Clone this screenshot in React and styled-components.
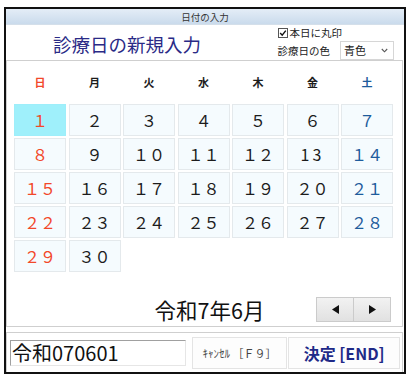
import React from "react";
import styled, { createGlobalStyle } from "styled-components";

const GlobalStyle = createGlobalStyle`
  html, body {
    margin: 0;
    padding: 0;
    background: #ffffff;
    font-family: "Noto Sans CJK JP", "Noto Sans", sans-serif;
  }
`;

const Page = styled.div`
  padding: 7px 0 0 4px;
`;

const Window = styled.div`
  width: 402px;
  box-sizing: border-box;
  border: 2px solid #111;
  background: #fff;
  display: flex;
  flex-direction: column;
`;

const TitleBar = styled.div`
  height: 16px;
  background: linear-gradient(#e4edf7, #cadbec);
  display: flex;
  align-items: center;
  justify-content: center;
  font-size: 9.5px;
  color: #333;
  border-bottom: 1px solid #d4dfea;
  box-sizing: border-box;
`;

const Header = styled.div`
  height: 35px;
  display: grid;
  grid-template-columns: 1fr auto;
  align-items: center;
  padding: 0 10px 0 47px;
`;

const Heading = styled.div`
  font-size: 18.5px;
  color: #2a2a86;
  padding-top: 3px;
`;

const Controls = styled.div`
  display: flex;
  flex-direction: column;
  gap: 1px;
  font-size: 10.5px;
  color: #222;
`;

const ControlRow = styled.div`
  display: flex;
  align-items: center;
  gap: ${(p) => p.gap || 2}px;
  height: ${(p) => p.h || 14}px;
`;

const SelectBox = styled.div`
  width: 54px;
  height: 19px;
  box-sizing: border-box;
  border: 1px solid #d6d6d6;
  display: flex;
  align-items: center;
  justify-content: space-between;
  padding: 0 5px 0 3px;
  font-size: 11px;
  background: #fff;
`;

const Panel = styled.div`
  border: 1px solid #cfcfcf;
  margin-right: 1px;
  box-sizing: border-box;
  padding: 11px 0 7px 7px;
`;

const Cols = styled.div`
  display: grid;
  grid-template-columns: repeat(7, 52px);
  column-gap: 2.5px;
  row-gap: 2px;
`;

const WeekRow = styled(Cols)`
  height: 20px;
  margin-bottom: 12px;
`;

const WeekDay = styled.div`
  display: flex;
  align-items: center;
  justify-content: center;
  font-size: 11px;
  font-weight: 700;
  color: ${(p) => p.color};
`;

const DayGrid = styled(Cols)`
  grid-auto-rows: 32px;
`;

const DayCell = styled.div`
  box-sizing: border-box;
  border: 1px solid ${(p) => (p.active ? "#9eeefa" : "#e4e9ec")};
  background: ${(p) => (p.active ? "#9ff0fb" : "#f5fbfe")};
  display: flex;
  align-items: center;
  justify-content: center;
  font-size: 16px;
  color: ${(p) => p.color};
  letter-spacing: ${(p) => p.spacing || 0}px;
`;

const Footer = styled.div`
  margin-top: 22px;
  height: 25px;
  display: grid;
  grid-template-columns: 1fr auto 1fr;
  align-items: center;
  padding-right: 11px;
`;

const MonthLabel = styled.div`
  grid-column: 2;
  font-size: 21.5px;
  color: #111;
  padding-left: 14px;
`;

const NavGroup = styled.div`
  grid-column: 3;
  justify-self: end;
  display: flex;
`;

const NavButton = styled.div`
  width: 38px;
  height: 25px;
  box-sizing: border-box;
  border: 1px solid #cbcbcb;
  margin-left: ${(p) => (p.joined ? "-1px" : "0")};
  background: linear-gradient(#f2f2f2, #e1e1e1);
  display: flex;
  align-items: center;
  justify-content: center;
`;

const BottomBar = styled.div`
  margin-top: 5px;
  margin-right: 1px;
  height: 40px;
  box-sizing: border-box;
  border: 1px solid #cfcfcf;
  border-bottom: none;
  display: flex;
  align-items: center;
  padding: 0 2px 0 3px;
`;

const DateInput = styled.div`
  width: 176px;
  height: 26px;
  box-sizing: border-box;
  border-top: 1px solid #a0a0a0;
  border-left: 1px solid #a0a0a0;
  border-right: 1px solid #e6e6e6;
  border-bottom: 1px solid #e6e6e6;
  display: flex;
  align-items: center;
  padding-left: 1px;
  font-size: 20px;
  color: #111;
`;

const ActionButton = styled.div`
  width: ${(p) => p.w}px;
  height: 32px;
  box-sizing: border-box;
  border: 1px solid #e4e4e4;
  margin-left: ${(p) => p.ml || 0}px;
  background: #fdfdfd;
  display: flex;
  align-items: center;
  justify-content: center;
  font-size: ${(p) => p.size}px;
  font-weight: ${(p) => p.weight || 400};
  color: ${(p) => p.color};
`;

const RED = "#f2482a";
const BLUE = "#1e5c9c";
const INK = "#1c1c1c";

const weekdays = ["日", "月", "火", "水", "木", "金", "土"];

const toWide = (n) =>
  String(n)
    .split("")
    .map((c) => String.fromCharCode(c.charCodeAt(0) + 0xfee0))
    .join("");

const Triangle = ({ dir }) => (
  <svg width="7" height="9" viewBox="0 0 7 9">
    {dir === "left" ? (
      <polygon points="7,0 7,9 0,4.5" fill="#111" />
    ) : (
      <polygon points="0,0 0,9 7,4.5" fill="#111" />
    )}
  </svg>
);

const CheckIcon = () => (
  <svg width="10" height="10" viewBox="0 0 10 10">
    <rect x="0.5" y="0.5" width="9" height="9" fill="#fff" stroke="#555" />
    <path d="M2.2 5 L4.2 7.2 L7.8 2.6" fill="none" stroke="#111" strokeWidth="1.4" />
  </svg>
);

const Chevron = () => (
  <svg width="7" height="5" viewBox="0 0 7 5">
    <path d="M0.8 1 L3.5 3.8 L6.2 1" fill="none" stroke="#555" strokeWidth="1.1" />
  </svg>
);

const App = () => {
  const days = Array.from({ length: 30 }, (_, i) => i + 1);

  return (
    <Page>
      <GlobalStyle />
      <Window>
        <TitleBar>日付の入力</TitleBar>
        <Header>
          <Heading>診療日の新規入力</Heading>
          <Controls>
            <ControlRow>
              <CheckIcon />
              <span>本日に丸印</span>
            </ControlRow>
            <ControlRow gap={10} h={19}>
              <span>診療日の色</span>
              <SelectBox>
                <span>青色</span>
                <Chevron />
              </SelectBox>
            </ControlRow>
          </Controls>
        </Header>
        <Panel>
          <WeekRow>
            {weekdays.map((w, idx) => (
              <WeekDay
                key={w}
                color={idx === 0 ? RED : idx === 6 ? BLUE : INK}
              >
                {w}
              </WeekDay>
            ))}
          </WeekRow>
          <DayGrid>
            {days.map((d) => {
              const col = (d - 1) % 7;
              const color = col === 0 ? RED : col === 6 ? BLUE : INK;
              const half = d === 13;
              return (
                <DayCell
                  key={d}
                  active={d === 1}
                  color={color}
                  spacing={half ? 3 : 0}
                >
                  {half ? String(d) : toWide(d)}
                </DayCell>
              );
            })}
          </DayGrid>
          <Footer>
            <MonthLabel>令和7年6月</MonthLabel>
            <NavGroup>
              <NavButton>
                <Triangle dir="left" />
              </NavButton>
              <NavButton joined>
                <Triangle dir="right" />
              </NavButton>
            </NavGroup>
          </Footer>
        </Panel>
        <BottomBar>
          <DateInput>令和070601</DateInput>
          <ActionButton w={96} ml={6} size={11} color="#444">
            ｷｬﾝｾﾙ ［Ｆ９］
          </ActionButton>
          <ActionButton w={112} ml={1} size={16} weight={700} color="#1f2a88">
            決定 [END]
          </ActionButton>
        </BottomBar>
      </Window>
    </Page>
  );
};

export default App;
